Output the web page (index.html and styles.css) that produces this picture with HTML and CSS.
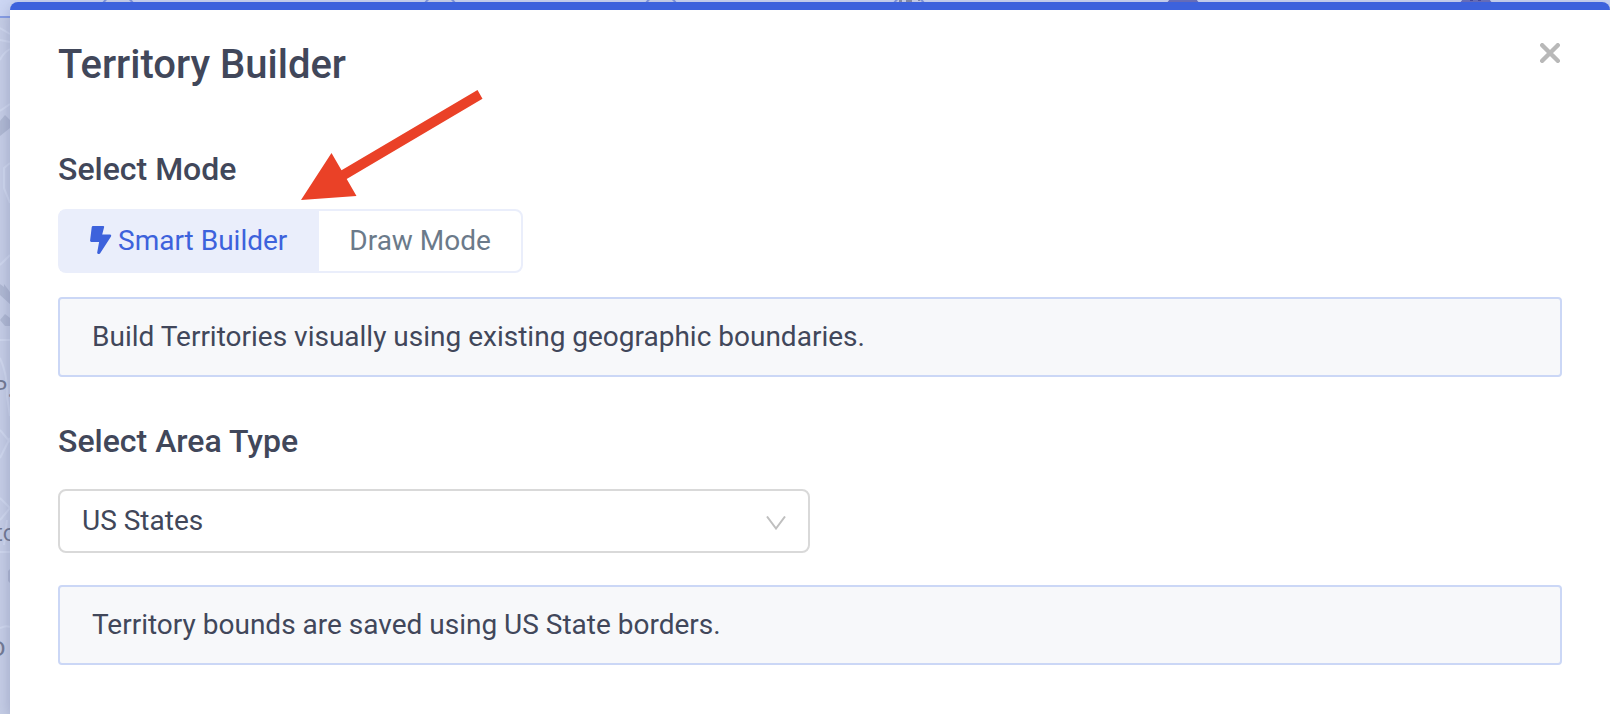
FILE: index.html
```
<!DOCTYPE html>
<html lang="en">
<head>
    <meta charset="UTF-8">
    <meta name="viewport" content="width=device-width, initial-scale=1.0">
    <title>Territory Builder</title>
    <link rel="stylesheet" href="styles.css">
</head>
<body>
    <!-- Map behind the dialog -->
    <div class="map" aria-hidden="true">
        <svg class="map-art" width="1610" height="714">
            <rect class="map-toolbar" width="1610" height="16"/>
            <rect class="map-toolbar-line" y="16" width="1610" height="2"/>
            <g class="map-ring">
                <circle cx="118" cy="13" r="18"/>
                <circle cx="440" cy="13" r="18"/>
                <circle cx="661" cy="13" r="18"/>
                <circle cx="909" cy="13" r="18"/>
            </g>
            <path d="M899 1h3M906 1h6M918 0h2" stroke="#6f7690" stroke-width="1.500"/>
            <g class="map-dot">
                <circle cx="1183" cy="13" r="19"/>
                <circle cx="1476" cy="13" r="19"/>
            </g>
            <path d="M1470 0h3M1478 0h3" stroke="#46489a" stroke-width="2"/>
            <g class="map-road">
                <path d="M0 28l10 6M0 40l10 2M10 49q-7 4-10 11M0 111l10-7M0 127h10M10 163l-6 5v20l6 15M0 265l10-10M0 340h10M0 358q8 18 7 38l3 20M0 430l10 12M10 438L0 458M0 498l10 10-10 12M0 552h10M4 545l3-25M0 628q6-3 10-1"/>
            </g>
            <g class="map-block">
                <path d="M0 121l5-6 5 5v8L0 136zM0 284l4 3v-3l6 8v12l-10-9zM0 320l5-6 5 4v8H5z"/>
                <path d="M8 571l2-2v14l-2-2z"/>
            </g>
        </svg>
        <span class="map-label label-pa">P.</span>
        <span class="map-label label-to">to</span>
        <span class="map-label label-o">o</span>
    </div>

    <main class="modal" role="dialog" aria-labelledby="modalTitle">
        <header class="modal-header">
            <h1 id="modalTitle">Territory Builder</h1>
            <button type="button" class="close-button" aria-label="Close">
                <svg width="20" height="20" viewBox="0 0 20 20">
                    <path d="M2.2 2.2l15.6 15.6M17.8 2.2L2.2 17.8"/>
                </svg>
            </button>
        </header>

        <section class="mode-section">
            <h2 id="modeTitle">Select Mode</h2>
            <div class="mode-toggle" role="radiogroup" aria-labelledby="modeTitle">
                <input type="radio" id="smartBuilder" name="mode" value="smart" checked>
                <label for="smartBuilder">
                    <svg class="bolt" width="22" height="28" viewBox="0 0 22 28">
                        <path d="M3 0h10.300q1.100 0 .8 1.200L12.200 8.500h7.700q1.800.2 1.100 2L10.200 27.300q-.7.900-2 .7-1.200-.3-1-1.500L9.100 16H1.300Q-.1 15.800.1 14.500L1.700 1.200Q1.900.1 3 0z"/>
                    </svg>
                    Smart Builder
                </label>
                <input type="radio" id="drawMode" name="mode" value="draw">
                <label for="drawMode">Draw Mode</label>
            </div>
            <p class="info-box">Build Territories visually using existing geographic boundaries.</p>
        </section>

        <section class="area-section">
            <h2><label for="areaType">Select Area Type</label></h2>
            <div class="select-wrapper">
                <select id="areaType" name="areaType">
                    <option>US States</option>
                </select>
                <svg class="chevron" width="20" height="14" viewBox="0 0 20 14">
                    <path d="M1 .5l9 12 9-12"/>
                </svg>
            </div>
            <p class="info-box">Territory bounds are saved using US State borders.</p>
        </section>
    </main>

    <!-- Pointer to the mode toggle -->
    <svg class="arrow" width="182" height="111" viewBox="0 0 182 111">
        <path d="M0 110L30.500 63 40.500 80.200 176.500 0l5 8.700L45.700 89 55.500 106z"/>
    </svg>
</body>
</html>
```
FILE: styles.css
```
* {
    box-sizing: border-box;
}

body {
    margin: 0;
    padding: 2px 0 0 10px;
    min-height: 100vh;
    display: flex;
    overflow: hidden;
    font-family: Roboto, Arial, sans-serif;
    font-size: 28px;
    color: #41475a;
    background-color: #c6cee6;
}

h1,
h2,
p {
    margin: 0;
}

h1,
h2 {
    font-weight: 500;
}

/* Map */
.map {
    position: absolute;
    inset: 0;
    overflow: hidden;
}

.map-art {
    display: block;
}

.map-toolbar {
    fill: #cdd7f4;
}

.map-toolbar-line {
    fill: #879ee5;
}

.map-ring {
    fill: #ccd3ed;
    stroke: #8196df;
    stroke-width: 2;
}

.map-dot {
    fill: #696fbd;
}

.map-road {
    fill: none;
    stroke: #d0d8ee;
    stroke-width: 2;
}

.map-block {
    fill: #b0b9d3;
}

.map-label {
    position: absolute;
    font-family: "Open Sans", sans-serif;
    font-size: 24px;
    line-height: 24px;
    color: #737a93;
}

.label-pa {
    left: -7px;
    top: 376px;
}

.label-to {
    left: -6px;
    top: 520px;
}

.label-o {
    left: -11px;
    top: 633px;
    font-size: 28px;
}

/* Modal */
.modal {
    position: relative;
    flex: 1;
    padding: 30px 48px 48px;
    background-color: #fff;
    border-top: 8px solid #3d62dc;
    border-radius: 8px 8px 0 0;
    box-shadow: 0 4px 16px rgba(60, 70, 120, 0.3);
}

.modal-header {
    display: flex;
    justify-content: space-between;
    align-items: flex-start;
}

h1 {
    font-size: 40px;
    line-height: 50px;
}

.close-button {
    display: flex;
    padding: 3px 2px;
    border: none;
    background: none;
    cursor: pointer;
}

.close-button path {
    fill: none;
    stroke: #b8b8b8;
    stroke-width: 4.4;
    stroke-linecap: round;
}

h2 {
    font-size: 32px;
    line-height: 40px;
}

.mode-section {
    margin-top: 59px;
}

.area-section {
    margin-top: 44px;
}

/* Mode toggle */
.mode-toggle {
    display: inline-flex;
    margin: 20px 0 24px;
    height: 64px;
    border: 2px solid #eaeefb;
    border-radius: 8px;
    vertical-align: top;
}

.mode-toggle input {
    position: absolute;
    opacity: 0;
}

.mode-toggle label {
    display: flex;
    align-items: center;
    gap: 6px;
    padding: 0 30px 2px;
    color: #6b7a8a;
    cursor: pointer;
}

.mode-toggle label:first-of-type {
    padding-right: 32px;
}

.mode-toggle input:checked + label {
    color: #3d62dc;
    background-color: #eaeefb;
}

.bolt {
    fill: #3d62dc;
}

/* Info box */
.info-box {
    padding: 20px 32px;
    line-height: 36px;
    border: 2px solid #cbd7f6;
    border-radius: 4px;
    background-color: #f7f8fa;
}

/* Area select */
.select-wrapper {
    display: flex;
    align-items: center;
    width: 50%;
    margin: 28px 0 32px;
}

.select-wrapper select {
    flex: 1;
    height: 64px;
    padding: 0 56px 2px 22px;
    border: 2px solid #d9d9d9;
    border-radius: 8px;
    appearance: none;
    background-color: #fff;
    color: #41475a;
    font: inherit;
}

.chevron {
    margin-top: 4px;
    margin-left: -44px;
    margin-right: 24px;
    pointer-events: none;
}

.chevron path {
    fill: none;
    stroke: #bfbfbf;
    stroke-width: 2;
}

/* Arrow */
.arrow {
    position: absolute;
    left: 301px;
    top: 90px;
    fill: #ea4127;
    pointer-events: none;
}
```
